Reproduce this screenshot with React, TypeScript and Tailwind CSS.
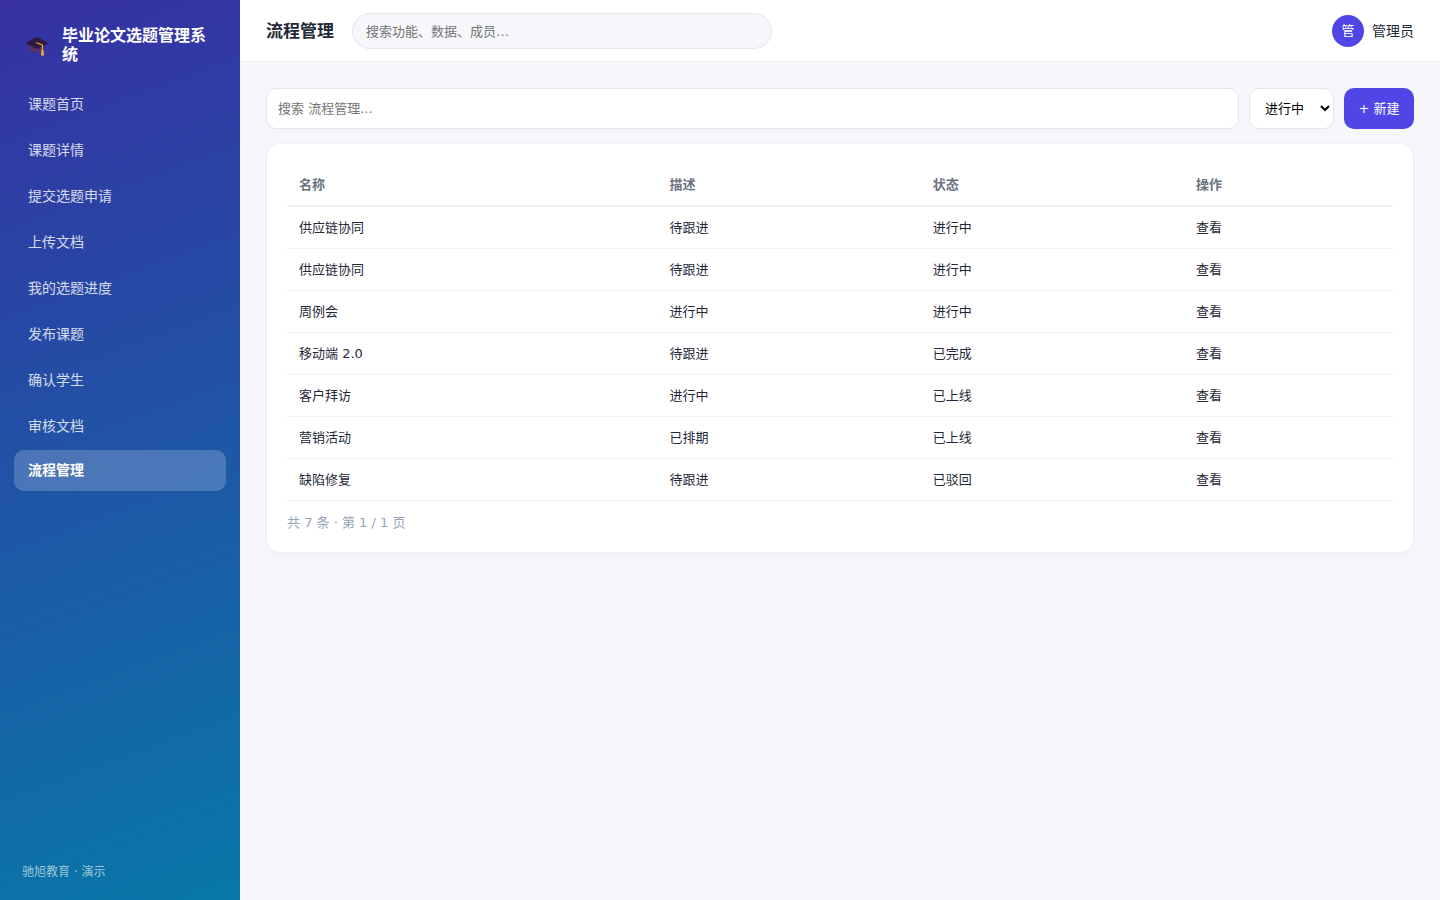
import React, { useState } from 'react';

type Row = {
  name: string;
  desc: string;
  status: string;
};

const NAV_ITEMS = [
  '课题首页',
  '课题详情',
  '提交选题申请',
  '上传文档',
  '我的选题进度',
  '发布课题',
  '确认学生',
  '审核文档',
  '流程管理',
];

const ROWS: Row[] = [
  { name: '供应链协同', desc: '待跟进', status: '进行中' },
  { name: '供应链协同', desc: '待跟进', status: '进行中' },
  { name: '周例会', desc: '进行中', status: '进行中' },
  { name: '移动端 2.0', desc: '待跟进', status: '已完成' },
  { name: '客户拜访', desc: '进行中', status: '已上线' },
  { name: '营销活动', desc: '已排期', status: '已上线' },
  { name: '缺陷修复', desc: '待跟进', status: '已驳回' },
];

const GraduationCap = () => (
  <svg viewBox="0 0 22 22" className="h-[22px] w-[22px] shrink-0" aria-hidden="true">
    <path d="M3 10v5c1 2 3.500 3.200 7 3.200 2.500 0 5-.8 6-2.200v-6z" fill="#533566" />
    <path d="M.4 8.700 9.600 3.400c.9-.4 1.700-.4 2.600 0l9.400 5.100c.4.300.4.700 0 1l-8.900 5c-.9.400-1.700.4-2.600 0L.4 9.700c-.4-.3-.4-.7 0-1z" fill="#2f1b3f" />
    <path d="m10.500 8.700 5.900 2.300v6" fill="none" stroke="#fbaa27" strokeWidth="1.200" strokeLinecap="round" strokeLinejoin="round" />
    <path d="M15.500 16h1.900l.6 5.300c-.9.600-2.200.6-3 0z" fill="#fbaa27" />
  </svg>
);

const Sidebar = ({ active, onSelect }: { active: string; onSelect: (item: string) => void }) => (
  <aside className="flex w-60 shrink-0 flex-col bg-[linear-gradient(160deg,#3730a3,#0878a8)] px-3.5 text-white">
    <div className="flex items-center gap-3.5 px-3 pt-[26px] pb-[18px]">
      <GraduationCap />
      <div className="text-base leading-[19px] font-bold">毕业论文选题管理系统</div>
    </div>
    <nav className="flex flex-col gap-1">
      {NAV_ITEMS.map((item) => (
        <a
          key={item}
          href="#"
          onClick={() => onSelect(item)}
          className={
            item === active
              ? 'rounded-[10px] bg-white/20 px-3.5 py-2.5 text-sm leading-[21px] font-bold text-white'
              : 'rounded-[10px] px-3.5 pt-[11px] pb-[9px] text-sm leading-[22px] text-white/80'
          }
        >
          {item}
        </a>
      ))}
    </nav>
    <div className="mt-auto px-2 pb-[18px] text-xs leading-5 text-white/60">驰旭教育 · 演示</div>
  </aside>
);

const Header = ({ title }: { title: string }) => (
  <header className="flex items-center gap-[18px] border-b border-[#eceef3] bg-white px-[26px] pt-[13px] pb-3">
    <h1 className="shrink-0 text-[17px] leading-6 font-bold">{title}</h1>
    <input
      type="search"
      aria-label="搜索功能、数据、成员"
      placeholder="搜索功能、数据、成员…"
      className="h-9 w-full max-w-[420px] rounded-full border border-[#e3e6ee] bg-[#f6f7fb] px-[13px] text-[13px] outline-none placeholder:text-[#757575]"
    />
    <div className="ml-auto flex shrink-0 items-center gap-2 text-sm">
      <span className="flex h-8 w-8 items-center justify-center rounded-full bg-[#4f46e5] text-[13px] text-white">管</span>
      <span>管理员</span>
    </div>
  </header>
);

export default function App() {
  const [active, setActive] = useState('流程管理');
  const [keyword, setKeyword] = useState('');
  const [status, setStatus] = useState('进行中');

  const rows = ROWS.filter((row) => row.name.includes(keyword));

  return (
    <div className="flex min-h-screen bg-[#f6f7fb] font-['DejaVu_Sans','Noto_Sans_CJK_SC',sans-serif] text-[#1f2937]">
      <Sidebar active={active} onSelect={setActive} />
      <div className="flex min-w-0 flex-1 flex-col">
        <Header title={active} />
        <main className="p-[26px]">
          <div className="mb-3.5 flex gap-2.5 text-[13px]">
            <input
              type="text"
              aria-label="搜索 流程管理"
              placeholder="搜索 流程管理..."
              value={keyword}
              onChange={(e) => setKeyword(e.target.value)}
              className="h-[41px] min-w-0 flex-1 rounded-[10px] border border-[#e3e6ee] bg-white px-[11px] outline-none placeholder:text-[#757575]"
            />
            <select
              aria-label="状态"
              value={status}
              onChange={(e) => setStatus(e.target.value)}
              className="h-[41px] w-[85px] rounded-[10px] border border-[#e3e6ee] bg-white px-[11px] text-black"
            >
              <option>进行中</option>
              <option>已完成</option>
              <option>已上线</option>
              <option>已驳回</option>
            </select>
            <button type="button" className="h-[41px] w-[70px] rounded-[10px] bg-[#4f46e5] text-white">
              + 新建
            </button>
          </div>

          <section className="rounded-[14px] border border-[#f0f1f6] bg-white p-5 text-[13px] shadow-[0_2px_6px_rgba(15,23,42,0.03)]">
            <table className="w-full table-fixed border-collapse text-left">
              <thead>
                <tr className="border-b-2 border-[#eef0f4] leading-[17px] text-[#6b7280]">
                  <th className="w-[33.5%] px-3 py-3 font-semibold">名称</th>
                  <th className="w-[23.8%] px-3 py-3 font-semibold">描述</th>
                  <th className="w-[23.8%] px-3 py-3 font-semibold">状态</th>
                  <th className="px-3 py-3 font-semibold">操作</th>
                </tr>
              </thead>
              <tbody>
                {rows.map((row, i) => (
                  <tr key={i} className="border-b border-[#eef0f4] leading-[17px]">
                    <td className="px-3 py-3">{row.name}</td>
                    <td className="px-3 py-3">{row.desc}</td>
                    <td className="px-3 py-3">{row.status}</td>
                    <td className="px-3 py-3">
                      <a href="#">查看</a>
                    </td>
                  </tr>
                ))}
              </tbody>
            </table>
            <div className="mt-3 leading-[19px] text-[#94a3b8]">共 {rows.length} 条 · 第 1 / 1 页</div>
          </section>
        </main>
      </div>
    </div>
  );
}
